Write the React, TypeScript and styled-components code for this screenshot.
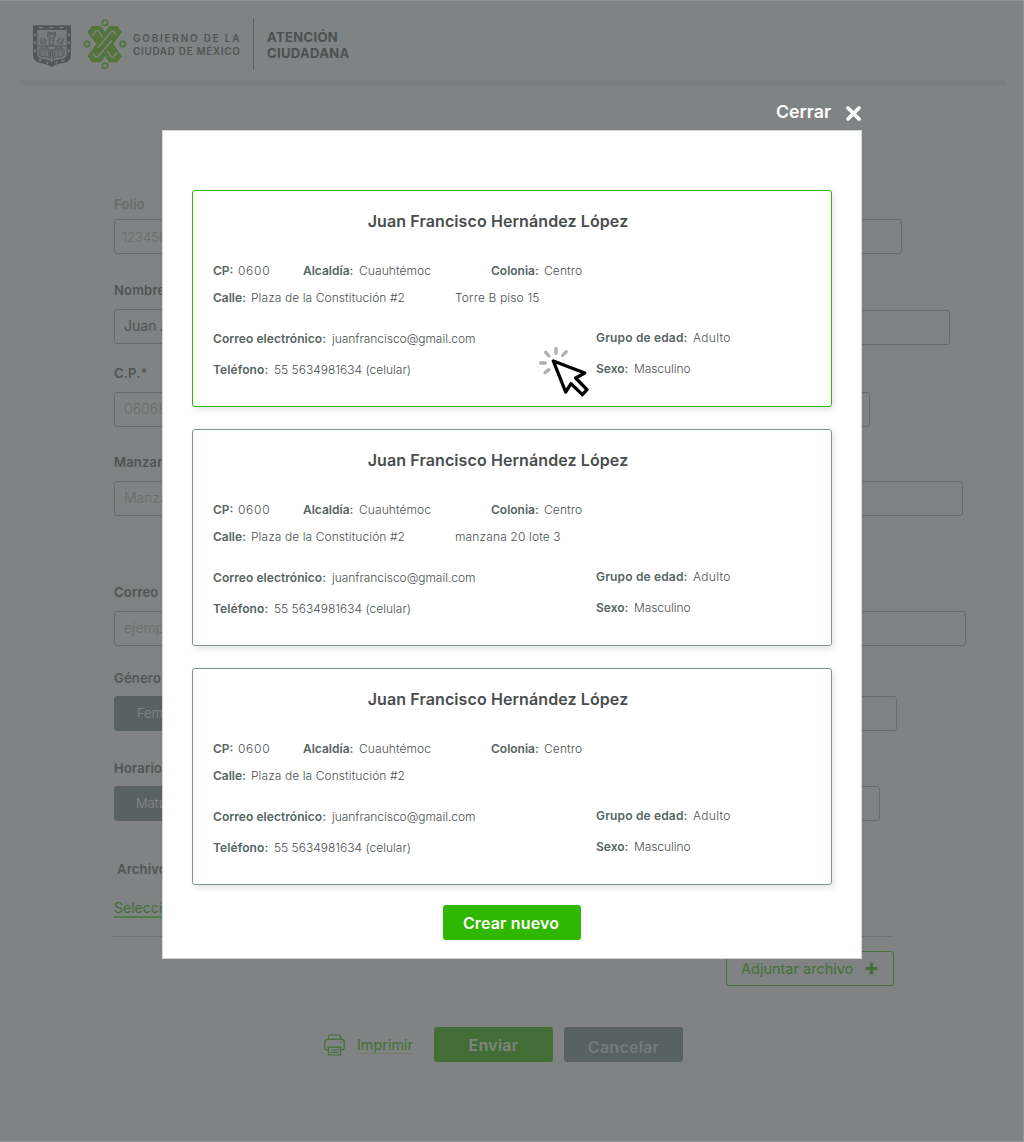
import React from 'react';
import styled, { createGlobalStyle } from 'styled-components';

const c = {
  veil: '#7f8383',
  line: '#686c6c',
  ink: '#4f5353',
  faint: '#696d6d',
  slate: '#596263',
  leaf: '#437035',
  green: '#30b700',
};

const GlobalStyle = createGlobalStyle`
  * { box-sizing: border-box; }
  body { margin: 0; background: ${c.veil}; font-family: Inter, "Open Sans", sans-serif; }
  button { font-family: inherit; padding: 0; cursor: pointer; }
`;

const Screen = styled.div`
  position: relative;
  width: 1024px;
  height: 1142px;
  overflow: hidden;
  background: ${c.veil};
  border: 1px solid #929595;
  border-left: 0;
`;

const Header = styled.header`
  height: 85px;
  margin: 0 18px 0 20px;
  padding: 17px 0 0 13px;
  display: flex;
  align-items: flex-start;
  border-bottom: 6px solid #7a7e7e;
`;
const Shield = styled.svg`
  width: 38px;
  height: 43px;
  margin-top: 7px;
`;
const Flower = styled.svg`
  width: 44px;
  height: 52px;
  margin: 0 6px 0 12px;
`;
const Government = styled.div`
  width: 120px;
  padding-top: 15px;
  display: grid;
  color: #505454;
  font-size: 9.8px;
  font-weight: 600;
  line-height: 12.5px;
  white-space: nowrap;
`;
const Spaced = styled.span<{ $gap: number }>`
  letter-spacing: ${p => p.$gap}px;
`;
const Area = styled.div`
  height: 52px;
  padding: 11px 0 0 13px;
  border-left: 1px solid #5e6262;
  color: #4d5051;
  font-size: 13px;
  font-weight: 700;
  letter-spacing: 0.35px;
  line-height: 16px;
  white-space: pre-line;
`;

const Form = styled.main`
  padding: 110px 0 0 114px;
`;
const Field = styled.section<{ $after: number; $gap?: number }>`
  margin-bottom: ${p => p.$after}px;
  display: grid;
  gap: ${p => p.$gap ?? 9}px;
`;
const Label = styled.label<{ $soft?: boolean; $indent?: boolean }>`
  height: 18px;
  padding-left: ${p => (p.$indent ? 3 : 0)}px;
  color: ${p => (p.$soft ? c.faint : '#505454')};
  font-size: 13px;
  font-weight: 600;
  line-height: 16px;
  letter-spacing: 0.2px;
`;
const Inputs = styled.div<{ $width: number }>`
  width: ${p => p.$width}px;
  display: grid;
  grid-template-columns: 260px 1fr;
  gap: 20px;
`;
const Box = styled.div<{ $dark?: boolean; $drop?: boolean; $pad?: number; $strong?: boolean }>`
  height: 35px;
  margin-top: ${p => (p.$drop ? 1 : 0)}px;
  padding-left: ${p => p.$pad ?? 9}px;
  border: 1px solid ${p => (p.$dark ? c.slate : c.line)};
  border-radius: 3px;
  background: ${p => (p.$dark ? c.slate : 'transparent')};
  color: ${p => (p.$dark ? '#868a8a' : p.$strong ? c.ink : c.faint)};
  font-size: ${p => (p.$dark ? 13 : 14)}px;
  font-weight: ${p => (p.$strong ? 400 : 300)};
  line-height: ${p => (p.$dark ? 33 : 32)}px;
`;
const FolioBox = styled(Box)`
  font-size: 13px;
  line-height: 35px;
`;
const FileLink = styled.a`
  display: block;
  width: 120px;
  height: 21px;
  margin: -40px 0 18px;
  border-bottom: 2px solid #527e45;
  color: ${c.leaf};
  font-size: 14px;
  line-height: 21px;
`;
const Attachments = styled.div`
  width: 780px;
  height: 50px;
  margin-left: -1px;
  padding-top: 14px;
  display: flex;
  justify-content: flex-end;
  border-top: 1px solid #6d7171;
`;
const AttachButton = styled.button`
  flex: none;
  width: 168px;
  height: 35px;
  margin-right: -1px;
  padding: 0 15px 0 14px;
  display: flex;
  align-items: center;
  justify-content: space-between;
  border: 1px solid ${c.leaf};
  border-radius: 3px;
  background: transparent;
  color: ${c.leaf};
  font-size: 14.5px;
`;
const Actions = styled.footer`
  margin: 41px 0 0 210px;
  display: flex;
  align-items: center;
`;
const Print = styled.a`
  width: 110px;
  display: flex;
  align-items: center;
  gap: 12px;
  color: ${c.leaf};
  font-size: 14.4px;
  line-height: 17px;
`;
const PrintText = styled.span`
  border-bottom: 1px solid #6e7f68;
`;
const Action = styled.button<{ $primary?: boolean }>`
  width: 119px;
  height: 35px;
  margin-right: 11px;
  padding-top: ${p => (p.$primary ? 1 : 5)}px;
  border: 0;
  border-radius: 3px;
  background: ${p => (p.$primary ? '#436d37' : c.slate)};
  color: ${p => (p.$primary ? '#808580' : '#757b7b')};
  font-size: 16px;
  font-weight: 600;
  letter-spacing: 0.25px;
`;

const Dialog = styled.div`
  position: absolute;
  top: 100px;
  left: 162px;
  width: 700px;
`;
const Close = styled.button`
  width: 100%;
  height: 29px;
  padding-bottom: 8px;
  display: flex;
  align-items: center;
  justify-content: flex-end;
  gap: 14px;
  border: 0;
  background: none;
  color: #fff;
  font-size: 17.8px;
  font-weight: 600;
`;
const CloseIcon = styled.svg`
  width: 17px;
  height: 17px;
  margin: 3px 0 0;
`;
const Panel = styled.div`
  height: 829px;
  padding: 59px 29px 0;
  display: flex;
  flex-direction: column;
  gap: 22px;
  border: 1px solid #d3d6d5;
  background: #fff;
`;
const Card = styled.article<{ $active?: boolean }>`
  position: relative;
  height: 217px;
  padding: 18px 20px 0;
  border: 1px solid ${p => (p.$active ? c.green : '#7c9490')};
  border-radius: 3px;
  box-shadow: 2px 3px 7px rgba(0, 0, 0, 0.11);
`;
const Name = styled.h2`
  margin: 0 28px 28px 0;
  color: #4a4d4d;
  font-size: 16px;
  font-weight: 600;
  letter-spacing: 0.1px;
  line-height: 24px;
  text-align: center;
`;
const Row = styled.div<{ $cols: string; $after: number }>`
  height: 20px;
  margin-bottom: ${p => p.$after}px;
  display: grid;
  grid-template-columns: ${p => p.$cols};
`;
const Columns = styled.div`
  display: grid;
  grid-template-columns: 383px 1fr;
`;
const Stack = styled.div<{ $lift?: boolean }>`
  margin-top: ${p => (p.$lift ? -1 : 0)}px;
  display: grid;
  align-content: start;
  row-gap: 11px;
`;
const Fact = styled.div<{ $key?: number }>`
  display: grid;
  grid-template-columns: ${p => (p.$key ? `${p.$key}px` : '')} 1fr;
  color: #4a4f4f;
  font-size: 12px;
  font-weight: 330;
  line-height: 20px;
  white-space: nowrap;
`;
const Key = styled.span<{ $gap?: number }>`
  color: #566462;
  font-weight: 600;
  letter-spacing: ${p => p.$gap ?? 0}px;
`;
const Value = styled.span<{ $gap?: number }>`
  letter-spacing: ${p => p.$gap ?? 0}px;
`;
const Cursor = styled.svg`
  position: absolute;
  top: 154px;
  left: 345px;
  width: 52px;
  height: 52px;
`;
const Create = styled.button`
  align-self: center;
  width: 138px;
  height: 35px;
  margin-top: -2px;
  padding: 1px 2px 0 0;
  border: 0;
  border-radius: 3px;
  background: ${c.green};
  color: #fff;
  font-size: 16px;
  font-weight: 600;
  letter-spacing: 0.15px;
`;

const people = [
  { extra: 'Torre B piso 15', active: true },
  { extra: 'manzana 20 lote 3', active: false },
  { extra: '', active: false },
];

function Person({ extra, active }: { extra: string; active: boolean }) {
  return (
    <Card $active={active}>
      <Name>Juan Francisco Hernández López</Name>
      <Row $cols="90px 188px 1fr" $after={7}>
        <Fact $key={25}><Key>CP:</Key><Value $gap={0.7}>0600</Value></Fact>
        <Fact $key={56}><Key>Alcaldía:</Key><Value $gap={0.08}>Cuauhtémoc</Value></Fact>
        <Fact $key={53}><Key>Colonia:</Key><Value $gap={0.1}>Centro</Value></Fact>
      </Row>
      <Row $cols="242px 1fr" $after={21}>
        <Fact $key={38}><Key>Calle:</Key><Value $gap={0.08}>Plaza de la Constitución #2</Value></Fact>
        <Fact><Value $gap={0.14}>{extra}</Value></Fact>
      </Row>
      <Columns>
        <Stack>
          <Fact $key={119}><Key $gap={0.06}>Correo electrónico:</Key><Value $gap={-0.04}>juanfrancisco@gmail.com</Value></Fact>
          <Fact $key={61}><Key $gap={0.1}>Teléfono:</Key><Value>55 5634981634 (celular)</Value></Fact>
        </Stack>
        <Stack $lift>
          <Fact $key={97}><Key $gap={0.16}>Grupo de edad:</Key><Value $gap={0.3}>Adulto</Value></Fact>
          <Fact $key={38}><Key>Sexo:</Key><Value $gap={-0.08}>Masculino</Value></Fact>
        </Stack>
      </Columns>
      {active && (
        <Cursor viewBox="174 106 156 156" fill="none" strokeLinecap="round" strokeLinejoin="round">
          <path d="M228 116v15M197 128l10 11M259 126l-11 11M182 160h14M195 189l12-9" stroke="#b0b0b0" strokeWidth="10" />
          <path d="M220 154L314 190L287 205L321 240L307 255L273 222L257 247Z" fill="#fff" stroke="#000" strokeWidth="10" />
        </Cursor>
      )}
    </Card>
  );
}

export default function App() {
  return (
    <>
      <GlobalStyle />
      <Screen>
        <Header>
          <Shield viewBox="99 74 114 129">
            <path d="M99 75H213V162Q213 185 192 188Q165 190 155 201Q145 190 119 188Q99 184 99 162Z" fill="#505555" />
            <path d="M112 89H200V160Q200 174 184 176Q163 178 155 185Q147 178 127 176Q112 174 112 160Z" fill="#787c7c" />
            <path d="M143 96h5v5h4v-5h6v5h4v-5h5v14h-5v25h-14v-25h-5Z M117 146h7v-5h6v5h6v-5h6v5h6v26l-26-3-5-7Z M162 146h5v-5h6v5h6v-5h6v5h8v16l-6 8-25 2Z" fill="#676c6c" stroke="#535858" strokeWidth="2" />
            <path d="M121 132l-3-17 8-6 1 9 7-9 2 8 6 3-5 12Z M189 132l4-17-8-6-1 9-7-9-3 8-6 3 5 12Z" fill="#626767" />
            <path d="M112 137h88M150 182l3-34h4l3 34" stroke="#4f5454" strokeWidth="3" fill="none" />
            <path d="M147 108h15M155 114v16M130 152v14M141 152v16M170 152v16M181 152v14M123 116l11 12M187 116l-11 12" stroke="#7c8080" strokeWidth="2.5" />
            <path d="M119 82h9M150 82h9M180 82h9M105 100v7M105 123v7M105 148v7M206 100v7M206 123v7M206 148v7M117 179l6 2M186 182l6-2M140 186l3 3M168 188l3-3" stroke="#7f8383" strokeWidth="4" strokeLinecap="round" />
          </Shield>
          <Flower viewBox="248 56 132 156" fill="none">
            <path d="M261 98L276 80H301L314 98L327 80H351L365 98L339 134L365 171L351 189H326L314 171L302 189H276L261 171L288 134Z" fill="#53743a" />
            <g stroke="#7f8383" strokeWidth="4.5">
              <path d="M275 109L286 96Q291 91 295 97L307 113" />
              <path d="M292 146L333 97Q338 92 342 98L347 106" />
              <path d="M335 123L294 171Q289 177 284 171L278 162" />
              <path d="M321 155L332 171Q337 177 341 171L351 159" />
            </g>
            <g stroke="#53743a" strokeWidth="5">
              <circle cx="314" cy="70" r="8" /><circle cx="314" cy="199" r="8" />
              <circle cx="260" cy="134" r="8" /><circle cx="367" cy="134" r="8" />
            </g>
          </Flower>
          <Government>
            <Spaced $gap={1.88}>GOBIERNO DE LA</Spaced>
            <Spaced $gap={0.76}>CIUDAD DE MÉXICO</Spaced>
          </Government>
          <Area>{'ATENCIÓN\nCIUDADANA'}</Area>
        </Header>

        <Form>
          <Field $after={28} $gap={5}>
            <Label $soft>Folio</Label>
            <Inputs $width={788}><FolioBox $pad={7}>12345678</FolioBox><Box /></Inputs>
          </Field>
          <Field $after={20}>
            <Label>Nombre</Label>
            <Inputs $width={836}><Box $strong>Juan Antonio</Box><Box $drop /></Inputs>
          </Field>
          <Field $after={27}>
            <Label>C.P.*</Label>
            <Inputs $width={756}><Box>06068</Box><Box /></Inputs>
          </Field>
          <Field $after={68}>
            <Label>Manzana</Label>
            <Inputs $width={849}><Box>Manzana</Box><Box /></Inputs>
          </Field>
          <Field $after={24}>
            <Label>Correo</Label>
            <Inputs $width={852}><Box>ejemplo</Box><Box /></Inputs>
          </Field>
          <Field $after={29} $gap={8}>
            <Label>Género</Label>
            <Inputs $width={783}><Box $dark $pad={22}>Femenino</Box><Box /></Inputs>
          </Field>
          <Field $after={40} $gap={8}>
            <Label>Horario</Label>
            <Inputs $width={766}><Box $dark $pad={21}>Matutino</Box><Box /></Inputs>
          </Field>
          <Field $after={58}>
            <Label $indent>Archivo</Label>
          </Field>
          <FileLink>Seleccionar</FileLink>
          <Attachments>
            <AttachButton>
              Adjuntar archivo
              <svg width="13" height="13" viewBox="0 0 13 13" fill="none" stroke={c.leaf} strokeWidth="3.2">
                <path d="M6.5 .5v12M.5 6.5h12" />
              </svg>
            </AttachButton>
          </Attachments>
          <Actions>
            <Print>
              <svg width="21" height="22" viewBox="0 0 21 22" fill="none" stroke={c.leaf} strokeWidth="1.2">
                <path d="M4.5 5V3Q4.5 1 6.5 1H14.5Q16.5 1 16.5 3V5" />
                <path d="M4.5 16H3Q.8 16 .8 13.5V8Q.8 5.3 3.5 5.3H17.5Q20.2 5.3 20.2 8V13.5Q20.2 16 18 16H16.5" />
                <path d="M3.5 13.2H17.5M4.5 13.2V21H16.5V13.2M6.5 16H14.5M6.5 18.5H14.5M16 8.3H17.5" />
              </svg>
              <PrintText>Imprimir</PrintText>
            </Print>
            <Action $primary>Enviar</Action>
            <Action>Cancelar</Action>
          </Actions>
        </Form>

        <Dialog>
          <Close>
            Cerrar
            <CloseIcon viewBox="0 0 17 17" fill="none" stroke="#fff" strokeWidth="3.8" strokeLinecap="round">
              <path d="M3 3l11 11M14 3L3 14" />
            </CloseIcon>
          </Close>
          <Panel>
            {people.map((p, i) => <Person key={i} {...p} />)}
            <Create>Crear nuevo</Create>
          </Panel>
        </Dialog>
      </Screen>
    </>
  );
}
